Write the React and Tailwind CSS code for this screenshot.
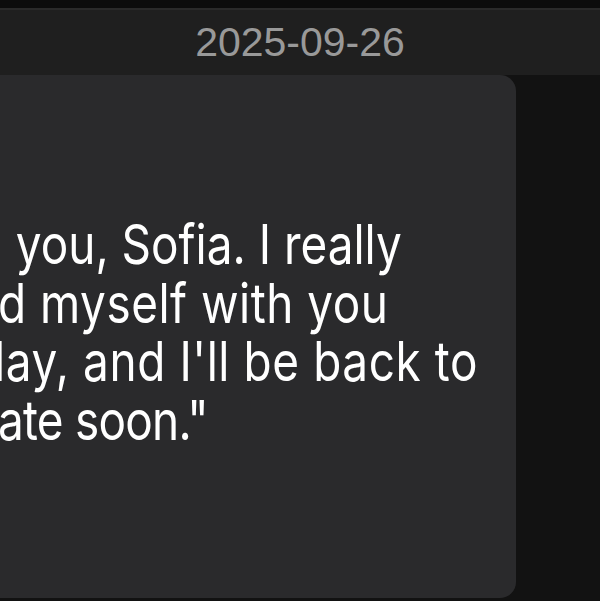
import React from "react";

const lines = [
  { text: "you, Sofia. I really", cls: "pl-[19px]" },
  { text: "d myself with you", cls: "-ml-[2px] tracking-[0.6px]" },
  { text: "day, and I'll be back to", cls: "-ml-[23px] tracking-[0.7px]" },
  { text: "ate soon.\"", cls: "-ml-[2px] tracking-[-0.9px]" },
];

export default function App() {
  return (
    <div className="w-[600px] h-[601px] overflow-hidden bg-[#121212] flex flex-col">
      {/* top strip */}
      <div className="h-[8px] bg-[#0c0c0c]" />
      <div className="h-[2px] bg-[#2a2a2a]" />

      {/* date header */}
      <div className="h-[65px] bg-[#1f1f1f] flex items-center justify-center">
        <span
          className="text-[41px] text-[#999999] leading-none"
          style={{ fontFamily: '"Liberation Sans", Arial, sans-serif' }}
        >
          2025-09-26
        </span>
      </div>

      {/* message card */}
      <div className="flex flex-1 pb-[3px]">
        <div className="w-[516px] bg-[#2a2a2c] rounded-r-[16px] pt-[140px] overflow-hidden">
          {lines.map((l) => (
            <div
              key={l.text}
              className={`whitespace-nowrap text-white text-[55px] leading-[58.5px] origin-left scale-x-[0.835] ${l.cls}`}
              style={{ fontFamily: "Inter, sans-serif" }}
            >
              {l.text}
            </div>
          ))}
        </div>
      </div>
    </div>
  );
}
